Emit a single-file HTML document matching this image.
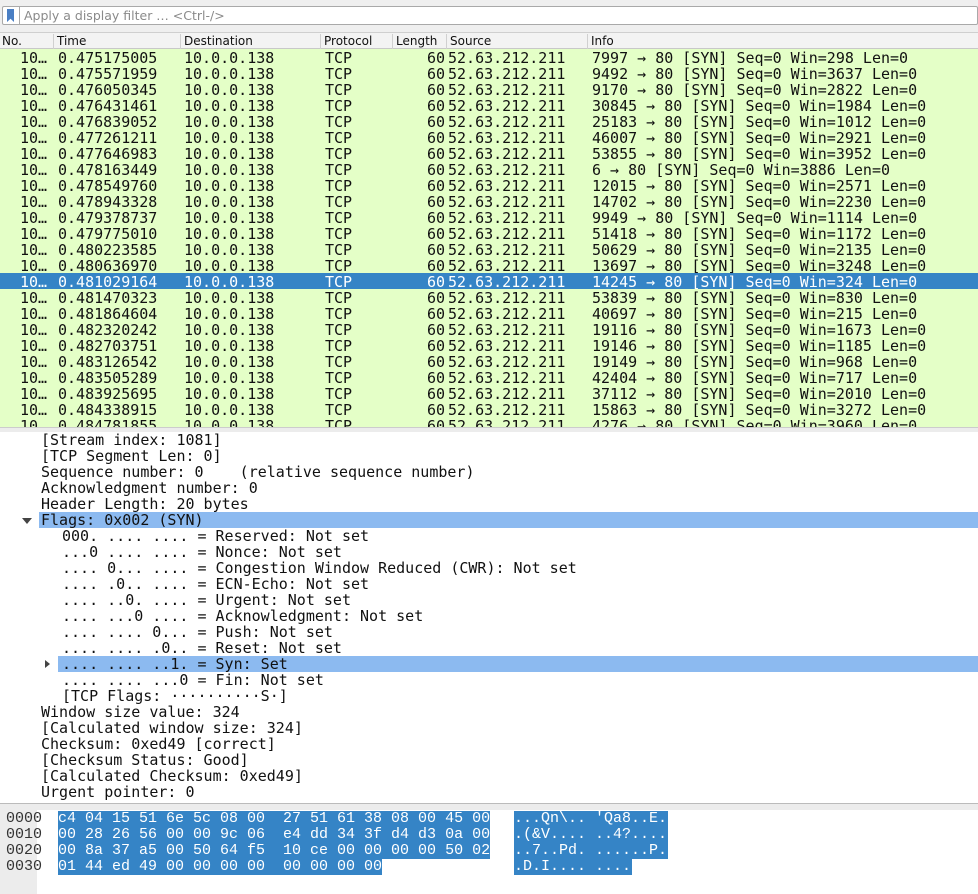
<!DOCTYPE html>
<html><head><meta charset="utf-8"><style>
*{margin:0;padding:0;box-sizing:border-box}
body{width:978px;height:894px;overflow:hidden;background:#fff;position:relative;font-family:"DejaVu Sans Mono","Liberation Mono",monospace;font-size:15px;color:#111}
.a{position:absolute;white-space:pre;line-height:16px}
#top{position:absolute;left:0;top:0;width:978px;height:33px;background:#efefef}
#filter{position:absolute;left:2px;top:6px;width:976px;height:19px;border:1px solid #a9a9a9;background:#fff;border-radius:2px}
#filter .ic{position:absolute;left:4px;top:2px;width:7px;height:13px;background:#4a7fc4;clip-path:polygon(0 0,100% 0,100% 100%,50% 75%,0 100%)}
#filter .sep{position:absolute;left:16px;top:0;width:1px;height:17px;background:#aaa}
#filter .t{position:absolute;left:21px;top:1px;font:12.5px "DejaVu Sans",sans-serif;color:#8a8a8a}
#hdr{position:absolute;left:0;top:32px;width:978px;height:17px;background:#f3f3f3;border-top:1px solid #cfcfcf;border-bottom:1px solid #c8c8c8;font:12px "DejaVu Sans",sans-serif}
#hdr span{position:absolute;top:1px;height:15px;border-left:1px solid #d0d0d0;padding-left:3px}
#list{position:absolute;left:0;top:49px;width:978px;height:378px;background:#e4ffc7;overflow:hidden}
.r{position:absolute;left:0;width:978px;height:16px}
.r .a{top:1px}
.r.s{background:#3584c6;color:#fff}
#split1{position:absolute;left:0;top:427px;width:978px;height:5px;background:#ececec;border-top:1px solid #ccc}
#det{position:absolute;left:0;top:432px;width:978px;height:371px;background:#fff}
.hl{position:absolute;height:16px;background:#8cbaf0}
#split2{position:absolute;left:0;top:803px;width:978px;height:7px;background:#ececec;border-top:1px solid #bbb}
#hex{position:absolute;left:0;top:810px;width:978px;height:84px;background:#fff;font-family:"Liberation Mono",monospace}
#gut{position:absolute;left:0;top:0;width:37px;height:84px;background:#ececec}
.hb{position:absolute;height:16px;background:#3584c6}
.tri{position:absolute;width:0;height:0}
</style></head><body>
<div id="top"><div id="filter"><div class="ic"></div><div class="sep"></div><div class="t">Apply a display filter … &lt;Ctrl-/&gt;</div></div></div>
<div id="hdr">
<span style="left:-1px;border:none">No.</span>
<span style="left:53px">Time</span>
<span style="left:180px">Destination</span>
<span style="left:320px">Protocol</span>
<span style="left:392px">Length</span>
<span style="left:446px">Source</span>
<span style="left:587px">Info</span>
</div>
<div id="list"></div>
<div id="split1"></div>
<div id="det">
<div class="hl" style="left:39px;top:80px;width:939px"></div>
<div class="hl" style="left:58px;top:224px;width:920px"></div>
<div class="tri" style="left:22px;top:86px;border-left:5px solid transparent;border-right:5px solid transparent;border-top:6px solid #444"></div>
<div class="tri" style="left:45px;top:228px;border-top:4px solid transparent;border-bottom:4px solid transparent;border-left:5px solid #444"></div>
<div id="dl"></div>
</div>
<div id="split2"></div>
<div id="hex"><div id="gut"></div>
<div class="hb" style="left:58px;top:1px;width:432px"></div>
<div class="hb" style="left:58px;top:17px;width:432px"></div>
<div class="hb" style="left:58px;top:33px;width:432px"></div>
<div class="hb" style="left:58px;top:49px;width:324px"></div>
<div class="hb" style="left:514px;top:1px;width:154px"></div>
<div class="hb" style="left:514px;top:17px;width:154px"></div>
<div class="hb" style="left:514px;top:33px;width:154px"></div>
<div class="hb" style="left:514px;top:49px;width:118px"></div>
<div class="a" style="left:6px;top:1px;color:#333">0000
0010
0020
0030</div>
<div class="a" style="left:58px;top:1px;color:#fff">c4 04 15 51 6e 5c 08 00  27 51 61 38 08 00 45 00
00 28 26 56 00 00 9c 06  e4 dd 34 3f d4 d3 0a 00
00 8a 37 a5 00 50 64 f5  10 ce 00 00 00 00 50 02
01 44 ed 49 00 00 00 00  00 00 00 00</div>
<div class="a" style="left:514px;top:1px;color:#fff">...Qn\.. 'Qa8..E.
.(&amp;V.... ..4?....
..7..Pd. ......P.
.D.I.... ....</div>
</div>
<script>
var d=[["0.475175005","7997 → 80 [SYN] Seq=0 Win=298 Len=0"],["0.475571959","9492 → 80 [SYN] Seq=0 Win=3637 Len=0"],["0.476050345","9170 → 80 [SYN] Seq=0 Win=2822 Len=0"],["0.476431461","30845 → 80 [SYN] Seq=0 Win=1984 Len=0"],["0.476839052","25183 → 80 [SYN] Seq=0 Win=1012 Len=0"],["0.477261211","46007 → 80 [SYN] Seq=0 Win=2921 Len=0"],["0.477646983","53855 → 80 [SYN] Seq=0 Win=3952 Len=0"],["0.478163449","6 → 80 [SYN] Seq=0 Win=3886 Len=0"],["0.478549760","12015 → 80 [SYN] Seq=0 Win=2571 Len=0"],["0.478943328","14702 → 80 [SYN] Seq=0 Win=2230 Len=0"],["0.479378737","9949 → 80 [SYN] Seq=0 Win=1114 Len=0"],["0.479775010","51418 → 80 [SYN] Seq=0 Win=1172 Len=0"],["0.480223585","50629 → 80 [SYN] Seq=0 Win=2135 Len=0"],["0.480636970","13697 → 80 [SYN] Seq=0 Win=3248 Len=0"],["0.481029164","14245 → 80 [SYN] Seq=0 Win=324 Len=0"],["0.481470323","53839 → 80 [SYN] Seq=0 Win=830 Len=0"],["0.481864604","40697 → 80 [SYN] Seq=0 Win=215 Len=0"],["0.482320242","19116 → 80 [SYN] Seq=0 Win=1673 Len=0"],["0.482703751","19146 → 80 [SYN] Seq=0 Win=1185 Len=0"],["0.483126542","19149 → 80 [SYN] Seq=0 Win=968 Len=0"],["0.483505289","42404 → 80 [SYN] Seq=0 Win=717 Len=0"],["0.483925695","37112 → 80 [SYN] Seq=0 Win=2010 Len=0"],["0.484338915","15863 → 80 [SYN] Seq=0 Win=3272 Len=0"],["0.484781855","4276 → 80 [SYN] Seq=0 Win=3960 Len=0"]];
var h="";d.forEach(function(x,i){h+='<div class="r'+(i==14?' s':'')+'" style="top:'+(i*16)+'px"><span class="a" style="left:20px">10…</span><span class="a" style="left:58px">'+x[0]+'</span><span class="a" style="left:184px">10.0.0.138</span><span class="a" style="left:325px">TCP</span><span class="a" style="left:427px">60</span><span class="a" style="left:448px">52.63.212.211</span><span class="a" style="left:592px">'+x[1]+'</span></div>';});
document.getElementById("list").innerHTML=h;
var L=[[41,"[Stream index: 1081]"],[41,"[TCP Segment Len: 0]"],[41,"Sequence number: 0    (relative sequence number)"],[41,"Acknowledgment number: 0"],[41,"Header Length: 20 bytes"],[41,"Flags: 0x002 (SYN)"],[62,"000. .... .... = Reserved: Not set"],[62,"...0 .... .... = Nonce: Not set"],[62,".... 0... .... = Congestion Window Reduced (CWR): Not set"],[62,".... .0.. .... = ECN-Echo: Not set"],[62,".... ..0. .... = Urgent: Not set"],[62,".... ...0 .... = Acknowledgment: Not set"],[62,".... .... 0... = Push: Not set"],[62,".... .... .0.. = Reset: Not set"],[62,".... .... ..1. = Syn: Set"],[62,".... .... ...0 = Fin: Not set"],[62,"[TCP Flags: ··········S·]"],[41,"Window size value: 324"],[41,"[Calculated window size: 324]"],[41,"Checksum: 0xed49 [correct]"],[41,"[Checksum Status: Good]"],[41,"[Calculated Checksum: 0xed49]"],[41,"Urgent pointer: 0"]];
h="";L.forEach(function(x,i){h+='<div class="a" style="left:'+x[0]+'px;top:'+(i*16)+'px">'+x[1]+'</div>';});
document.getElementById("dl").innerHTML=h;
</script>
</body></html>
